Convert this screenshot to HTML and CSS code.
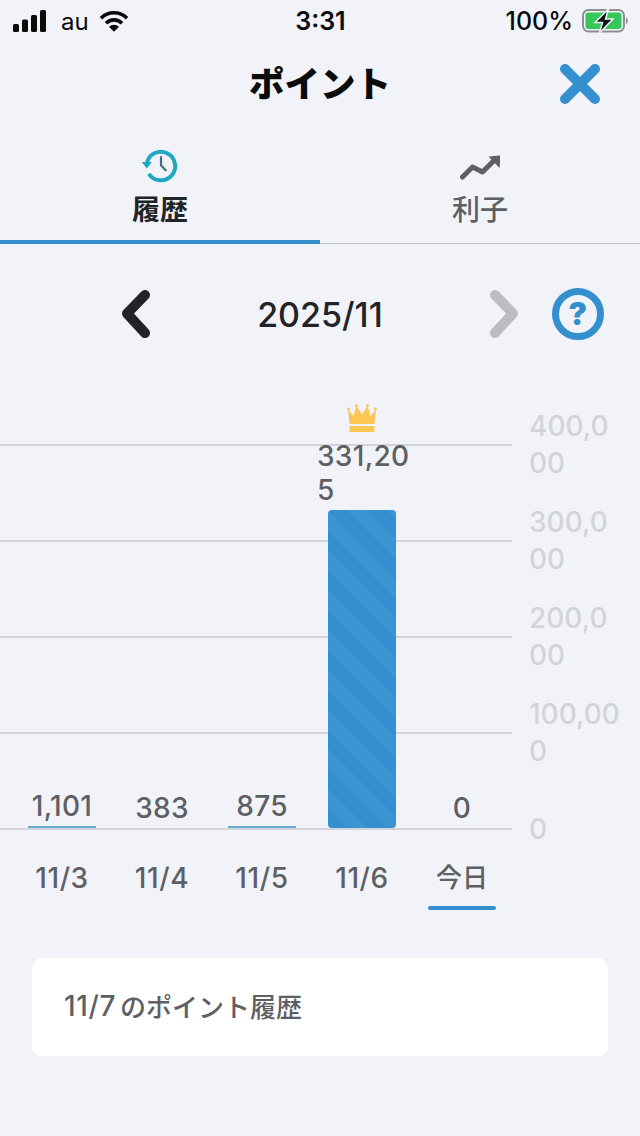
FILE: index.html
```html
<!doctype html>
<html>
  <head>
    <title>ポイント</title>
    <meta name="viewport" content="width=device-width, initial-scale=1">
    <link rel="stylesheet" href="styles.css">
  </head>
  <body>
    <div id="status">
      <div class="status-left">
        <svg class="signal" viewBox="0 0 34 22" fill="currentColor">
          <rect x="0" y="14" width="6" height="8" rx="1.5" />
          <rect x="9" y="9.5" width="6" height="12.5" rx="1.5" />
          <rect x="18" y="5" width="6" height="17" rx="1.5" />
          <rect x="27" y="0" width="6" height="22" rx="1.5" />
        </svg>
        <span class="carrier">au</span>
        <svg class="wifi" viewBox="0 0 30 22" fill="none" stroke="currentColor" stroke-width="3.6">
          <path d="M2 8.2a18.4 18.4 0 0 1 26 0" />
          <path d="M7 13.2a11.3 11.3 0 0 1 16 0" />
          <path d="M15 21.8l-5-5a7 7 0 0 1 10 0z" fill="currentColor" stroke="none" />
        </svg>
      </div>
      <div class="status-time">3:31</div>
      <div class="status-right">
        <span>100%</span>
        <svg class="battery" viewBox="0 0 46 24">
          <rect x="1" y="1" width="41" height="21.5" rx="5.5" fill="none" stroke="#8e8f91" stroke-width="2" />
          <rect x="3.500" y="3.500" width="36" height="16.500" rx="3" fill="#35c759" />
          <path d="M44 8.500c1.300.5 1.800 1.800 1.800 3.200s-.5 2.700-1.800 3.200z" fill="#8e8f91" />
          <path d="M26.500 0L13 13.500h7.500L17.500 24 31 10h-7.500z" fill="#111" stroke="#f1f3f9" stroke-width="1.500" />
        </svg>
      </div>
    </div>

    <header id="header">
      <h1>ポイント</h1>
      <svg class="close" viewBox="0 0 42 42" fill="none" stroke="#348fcf" stroke-width="10" stroke-linecap="round">
        <path d="M6 6l30 30M36 6L6 36" />
      </svg>
    </header>

    <nav id="tabs">
      <div class="tab active">
        <svg class="tab-icon" viewBox="0 0 40 40" fill="none" stroke="#1fa9c0" stroke-width="4">
          <path d="M6.800 17.500a14.300 14.300 0 1 1 2 10.200" />
          <path d="M1.700 16h10.200l-5.100 6.500z" fill="#1fa9c0" stroke="none" />
          <path d="M21 11v8.300l4.700 5" stroke="#4a6a80" stroke-width="2.200" stroke-linecap="round" />
        </svg>
        <span>履歴</span>
      </div>
      <div class="tab">
        <svg class="tab-icon" viewBox="0 0 40 40" fill="none" stroke="#5e5f64" stroke-width="5" stroke-linecap="round" stroke-linejoin="round">
          <path d="M2.500 31l10-10 10 5 11-11" />
          <path d="M28.500 10.500l12.500-1-1.500 12.500z" fill="#5e5f64" stroke="none" />
        </svg>
        <span>利子</span>
      </div>
    </nav>

    <section id="month">
      <div class="month-prev">
        <svg class="chevron" viewBox="0 0 34 48" fill="none" stroke="#222327" stroke-width="10" stroke-linecap="round" stroke-linejoin="round">
          <path d="M26 5L8 23.500 26 43" />
        </svg>
      </div>
      <div class="month-label">2025/11</div>
      <div class="month-next">
        <svg class="chevron" viewBox="0 0 34 48" fill="none" stroke="#bcbdc3" stroke-width="10" stroke-linecap="round" stroke-linejoin="round">
          <path d="M8 5l18 18.500L8 43" />
        </svg>
        <div class="help">?</div>
      </div>
    </section>

    <section id="chart">
      <div class="chart-main">
        <div class="plot">
          <div class="col">
            <div class="value">1,101</div>
            <div class="bar" style="height: 2px"></div>
          </div>
          <div class="col">
            <div class="value">383</div>
          </div>
          <div class="col">
            <div class="value">875</div>
            <div class="bar" style="height: 2px"></div>
          </div>
          <div class="col">
            <svg class="crown" viewBox="0 0 30 28" fill="#fcc653">
              <circle cx="1.500" cy="5" r="1.500" />
              <circle cx="9.500" cy="1.500" r="1.500" />
              <circle cx="20.500" cy="1.500" r="1.500" />
              <circle cx="28.500" cy="5" r="1.500" />
              <path d="M1 5.500l5.500 6.500L9.500 2l5.500 8.500L20.500 2l3 10L29 5.500 27.500 20h-25z" />
              <rect x="2.500" y="22" width="25" height="6" />
            </svg>
            <div class="value value-wrap">331,205</div>
            <div class="bar bar-top" style="height: 318px"></div>
          </div>
          <div class="col">
            <div class="value">0</div>
          </div>
        </div>
        <div class="days">
          <div class="day">11/3</div>
          <div class="day">11/4</div>
          <div class="day">11/5</div>
          <div class="day">11/6</div>
          <div class="day today">今日</div>
        </div>
      </div>
      <div class="y-axis">
        <div class="tick"><span>400,000</span></div>
        <div class="tick"><span>300,000</span></div>
        <div class="tick"><span>200,000</span></div>
        <div class="tick"><span>100,000</span></div>
        <div class="tick"><span>0</span></div>
      </div>
    </section>

    <section id="card"><span class="card-date">11/7</span>のポイント履歴</section>
  </body>
</html>
```

FILE: styles.css
```css
* {
  margin: 0;
  padding: 0;
  box-sizing: border-box;
}

html, body {
  width: 640px;
  height: 1136px;
  overflow: hidden;
}

body {
  background-color: #f1f3f9;
  color: #5e5f64;
  font-family: Inter, "Noto Sans CJK JP", sans-serif;
  font-weight: 500;
}

/* status bar */

#status {
  height: 42px;
  padding: 0 12px 0 13px;
  color: #0b0b0c;
  font-size: 25px;

  display: grid;
  grid-template-columns: 1fr auto 1fr;
  align-items: center;
}

.status-left {
  display: flex;
  align-items: center;
}

.signal {
  width: 34px;
  height: 22px;
}

.carrier {
  margin-left: 14px;
  font-size: 24px;
  font-weight: 400;
}

.wifi {
  width: 30px;
  height: 22px;
  margin-left: 10px;
}

.status-time {
  font-weight: 600;
}

.status-right {
  display: flex;
  align-items: center;
  justify-content: flex-end;
  gap: 9px;
}

.battery {
  width: 46px;
  height: 24px;
}

/* header */

#header {
  height: 78px;
  padding: 0 39px 0 0;

  display: flex;
  align-items: center;
  justify-content: flex-end;
  position: relative;
}

h1 {
  position: absolute;
  left: 0;
  right: 0;
  color: #0b0b0c;
  font-size: 35.5px;
  font-weight: 800;
  text-align: center;
}

.close {
  width: 42px;
  height: 42px;
  margin-top: 5px;
}

/* tabs */

#tabs {
  height: 124px;
  border-bottom: 1px solid #bfc0c5;

  display: grid;
  grid-template-columns: 1fr 1fr;
}

.tab {
  height: 124px;
  padding-top: 26px;
  font-size: 28px;
  line-height: 38px;

  display: flex;
  flex-direction: column;
  align-items: center;
  gap: 5px;
}

.tab.active {
  color: #222327;
  font-weight: 700;
  border-bottom: 4px solid #348fcf;
}

.tab-icon {
  width: 40px;
  height: 40px;
  flex: none;
}

/* month navigation */

#month {
  height: 140px;

  display: grid;
  grid-template-columns: 1fr auto 1fr;
  align-items: center;
}

.month-prev {
  padding-right: 104px;
  display: flex;
  justify-content: flex-end;
}

.month-label {
  color: #222327;
  font-size: 34px;
}

.month-next {
  padding-left: 104px;
  display: flex;
  align-items: center;
  gap: 31px;
}

.chevron {
  width: 34px;
  height: 48px;
  flex: none;
}

.help {
  width: 52px;
  height: 52px;
  flex: none;
  border: 7px solid #348fcf;
  border-radius: 50%;
  color: #348fcf;
  font-size: 31px;
  font-weight: 900;
  line-height: 37px;
  text-align: center;
}

/* chart */

#chart {
  margin-top: 13px;
  display: flex;
}

.chart-main {
  width: 512px;
  flex: none;
}

.plot {
  height: 433px;
  padding: 0 0 2px 12px;
  background-image: repeating-linear-gradient(to bottom, transparent 0, transparent 47px, #d3d4d9 47px, #d3d4d9 49px, transparent 49px, transparent 96px);

  display: flex;
  align-items: flex-end;
}

.col {
  width: 100px;

  display: flex;
  flex-direction: column;
  align-items: center;
}

.crown {
  width: 30px;
  height: 28px;
  margin-bottom: 7px;
}

.value {
  margin-bottom: 3px;
  font-size: 28px;
  letter-spacing: 0.3px;
  line-height: 34px;
}

.value-wrap {
  width: 95px;
  margin-left: 5px;
  word-break: break-all;
}

.bar {
  width: 68px;
  background-color: #6aa8d6;
}

.bar-top {
  border-radius: 4px;
  background-image: repeating-linear-gradient(45deg, #358fd0 0, #358fd0 14px, #3c94d3 14px, #3c94d3 28px);
}

.days {
  height: 84px;
  padding: 31px 0 0 12px;
  display: flex;
}

.day {
  width: 100px;
  font-size: 28px;
  letter-spacing: 0.6px;
  line-height: 34px;

  display: flex;
  flex-direction: column;
  align-items: center;
}

.today {
  font-size: 26px;
  letter-spacing: 0;
}

.today::after {
  content: "";
  width: 68px;
  height: 4px;
  margin-top: 11px;
  border-radius: 2px;
  background-color: #348fcf;
}

.y-axis {
  padding-left: 17px;
}

.tick {
  width: 96px;
  height: 96px;
  color: #d3d4d9;
  font-size: 28px;
  line-height: 37px;
  word-break: break-all;

  display: flex;
  align-items: center;
}

/* card */

#card {
  height: 98px;
  margin: 44px 32px 0;
  padding: 0 0 3px 32px;
  background-color: #fff;
  border-radius: 10px;
  font-size: 26px;

  display: flex;
  align-items: center;
}

.card-date {
  margin-right: 4px;
  font-size: 28px;
  letter-spacing: 0.6px;
}
```
